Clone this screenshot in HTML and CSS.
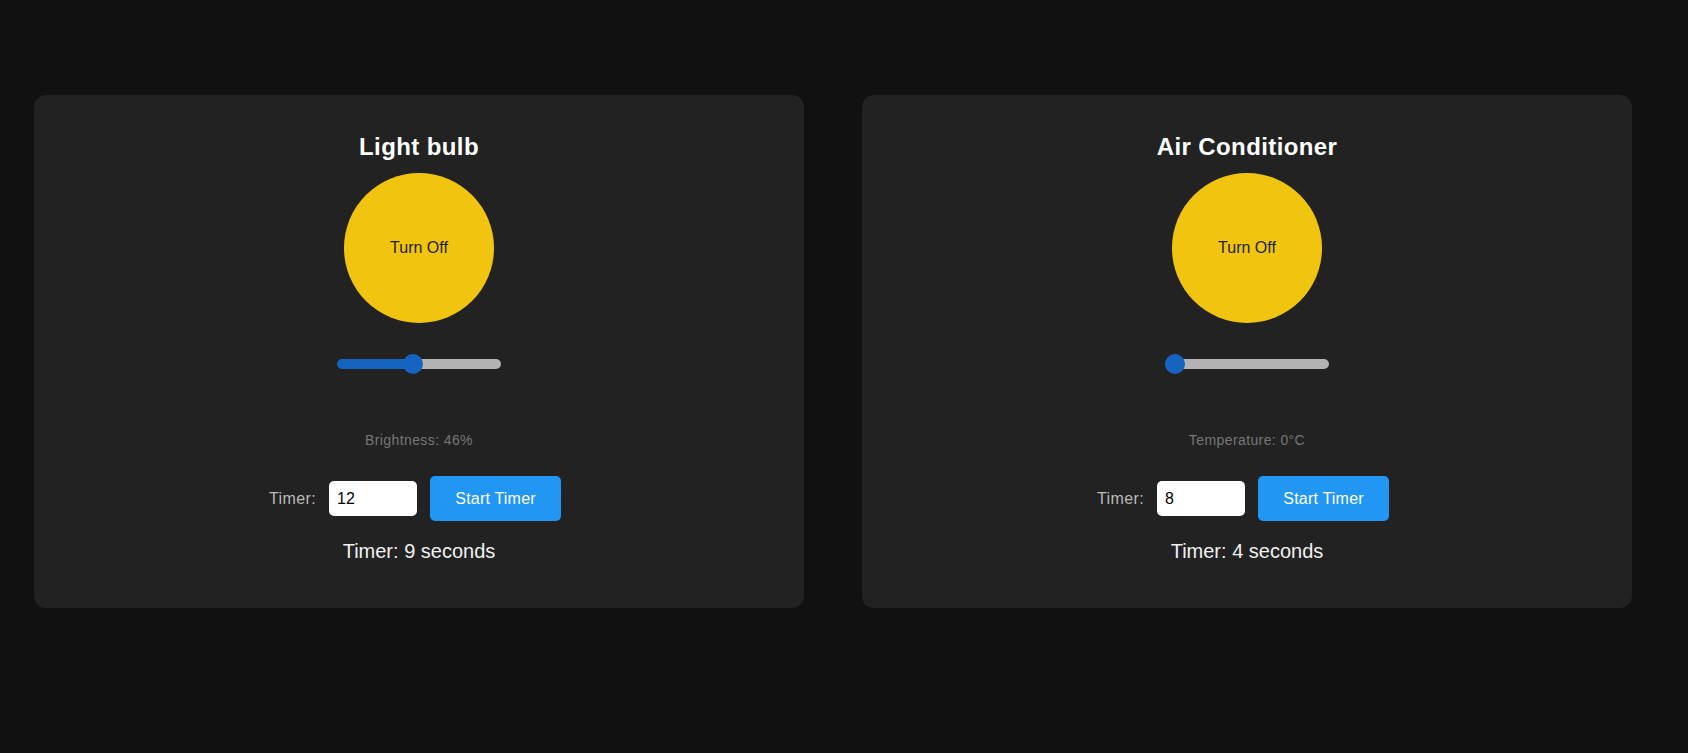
FILE: index.html
```html
<!DOCTYPE html>
<html lang="en">
<head>
<meta charset="utf-8">
<title>Devices</title>
<link rel="stylesheet" href="styles.css">
</head>
<body>
<div class="devices">
  <section class="card">
    <h2 class="card-title">Light bulb</h2>
    <button class="power">Turn Off</button>
    <div class="slider-wrap">
      <input class="slider" type="range" min="0" max="100" value="46" style="--v:0.46">
    </div>
    <p class="reading">Brightness: 46%</p>
    <div class="timer-row">
      <label class="timer-label">Timer:</label>
      <input class="timer-input" type="text" value="12">
      <button class="timer-btn">Start Timer</button>
    </div>
    <p class="timer-status">Timer: 9 seconds</p>
  </section>
  <section class="card">
    <h2 class="card-title">Air Conditioner</h2>
    <button class="power">Turn Off</button>
    <div class="slider-wrap">
      <input class="slider" type="range" min="0" max="100" value="0" style="--v:0">
    </div>
    <p class="reading">Temperature: 0°C</p>
    <div class="timer-row">
      <label class="timer-label">Timer:</label>
      <input class="timer-input" type="text" value="8">
      <button class="timer-btn">Start Timer</button>
    </div>
    <p class="timer-status">Timer: 4 seconds</p>
  </section>
</div>
</body>
</html>
```
FILE: styles.css
```css
* { box-sizing: border-box; }
html, body {
  margin: 0;
  background: #111111;
  font-family: "Liberation Sans", Arial, sans-serif;
}
.devices {
  display: flex;
  gap: 58px;
  padding: 95px 0 0 34px;
}
.card {
  width: 770px;
  background: #222222;
  border-radius: 12px;
  padding: 38px 0 45px;
  display: flex;
  flex-direction: column;
  align-items: center;
}
.card-title {
  margin: 0;
  font-size: 24px;
  line-height: 27px;
  font-weight: bold;
  letter-spacing: 0.4px;
  color: #ffffff;
}
.power {
  margin-top: 13px;
  width: 150px;
  height: 150px;
  border-radius: 50%;
  border: none;
  background: #f1c40f;
  color: #222222;
  font-family: inherit;
  font-size: 16px;
  padding: 0;
}
.slider-wrap {
  margin-top: 31px;
  height: 20px;
  display: flex;
  align-items: center;
}
.slider {
  -webkit-appearance: none;
  appearance: none;
  margin: 0;
  width: 164px;
  height: 10px;
  border-radius: 5px;
  background: linear-gradient(to right, #1565c0 0, #1565c0 calc(10px + (100% - 20px) * var(--v)), #b3b3b3 calc(10px + (100% - 20px) * var(--v)), #b3b3b3 100%);
  outline: none;
}
.slider::-webkit-slider-thumb {
  -webkit-appearance: none;
  appearance: none;
  width: 20px;
  height: 20px;
  border-radius: 50%;
  background: #1565c0;
  border: none;
}
.reading {
  margin: 58px 0 0;
  font-size: 14px;
  line-height: 16px;
  letter-spacing: 0.4px;
  color: #777777;
}
.timer-row {
  margin-top: 28px;
  height: 45px;
  display: flex;
  align-items: center;
  gap: 13px;
  padding-right: 8px;
}
.timer-label {
  font-size: 16px;
  letter-spacing: 0.4px;
  color: #bbbbbb;
}
.timer-input {
  width: 88px;
  height: 35px;
  border: none;
  border-radius: 5px;
  background: #ffffff;
  padding: 0 8px;
  font-family: inherit;
  font-size: 16px;
  color: #000000;
}
.timer-btn {
  width: 131px;
  height: 45px;
  border: none;
  border-radius: 5px;
  background: #2196f3;
  color: #ffffff;
  font-family: inherit;
  font-size: 16px;
  letter-spacing: 0.2px;
  padding: 0;
}
.timer-status {
  margin: 19px 0 0;
  font-size: 20px;
  line-height: 23px;
  color: #f0f0f0;
}
```
